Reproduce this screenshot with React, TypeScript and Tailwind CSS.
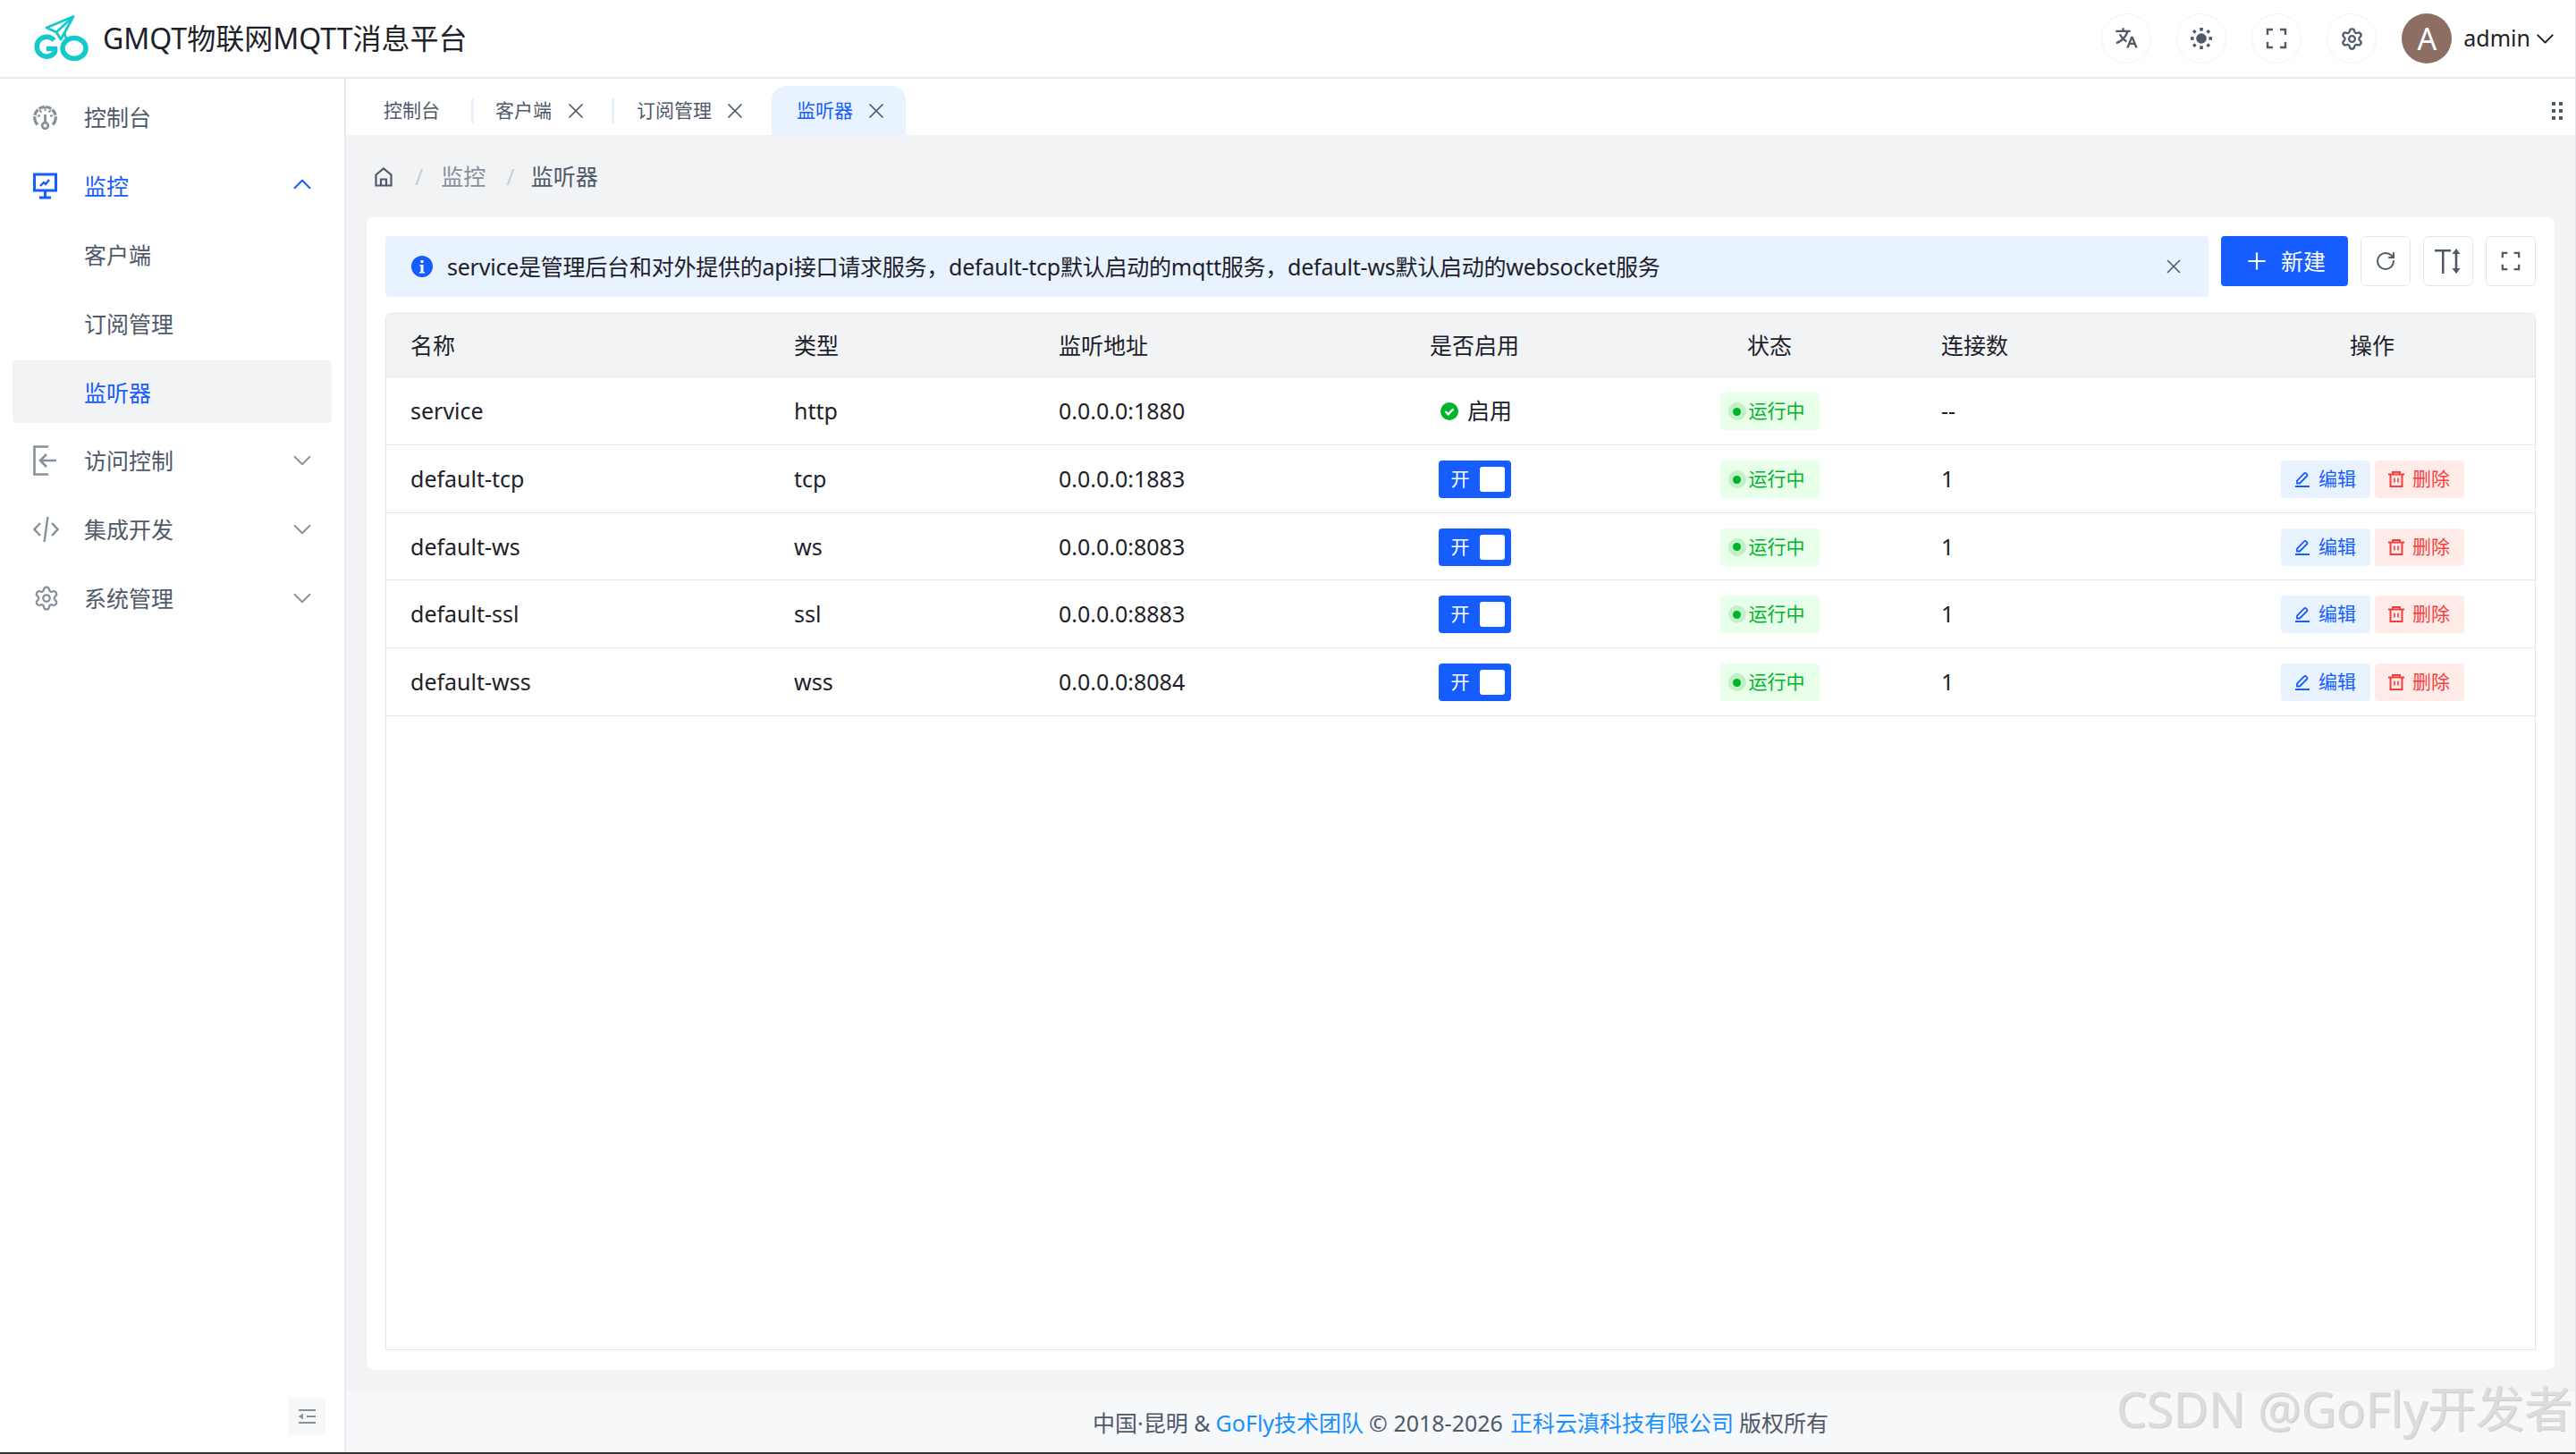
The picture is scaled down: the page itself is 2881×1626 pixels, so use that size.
import React from 'react'
import { ChevronDown, ChevronUp, Plus, RotateCw, Settings, X } from 'lucide-react'
import { RiTranslate2 } from 'react-icons/ri'

const Logo = () => (
  <svg width="64" height="52" viewBox="0 0 64 52" fill="none" className="shrink-0">
    <path d="M45 1.500 L15 14 L26 19 L31 27 L35 20 Z" stroke="#14c9c9" strokeWidth="2.800" strokeLinejoin="round" />
    <path d="M45 1.500 L26 19 M35 20 L37 26" stroke="#14c9c9" strokeWidth="2.600" />
    <path d="M23.500 28 A11 11 0 1 0 24.500 41 L24.500 37.500 L15 37.500" stroke="#14c9c9" strokeWidth="5.500" />
    <ellipse cx="46" cy="37" rx="13" ry="11.500" stroke="#14c9c9" strokeWidth="5.500" />
  </svg>
)

const FullIcon = ({ size = 24 }: { size?: number }) => (
  <svg width={size} height={size} viewBox="0 0 24 24" fill="none" stroke="#4e5969" strokeWidth="2.4">
    <path d="M2 8V2h6M16 2h6v6M22 16v6h-6M8 22H2v-6" />
  </svg>
)

const SunIcon = () => (
  <svg width="24" height="24" viewBox="0 0 24 24" fill="#4e5969">
    <circle cx="12" cy="12" r="5.8" />
    <rect x="10.2" y="0" width="3.6" height="3.6" />
    <rect x="10.2" y="20.4" width="3.6" height="3.6" />
    <rect x="0" y="10.2" width="3.6" height="3.6" />
    <rect x="20.4" y="10.2" width="3.6" height="3.6" />
    <rect x="2.6" y="2.6" width="3.4" height="3.4" transform="rotate(45 4.3 4.3)" />
    <rect x="18" y="2.6" width="3.4" height="3.4" transform="rotate(45 19.7 4.3)" />
    <rect x="2.6" y="18" width="3.4" height="3.4" transform="rotate(45 4.3 19.7)" />
    <rect x="18" y="18" width="3.4" height="3.4" transform="rotate(45 19.7 19.7)" />
  </svg>
)

const HeaderBtn = ({ children }: { children: React.ReactNode }) => (
  <div className="flex h-[56px] w-[56px] items-center justify-center rounded-full border border-[#f2f3f5] bg-white">{children}</div>
)

const DashboardIcon = () => (
  <svg width="27" height="30" viewBox="0 0 27 30" fill="none" stroke="#86909c" strokeWidth="3.200">
    <path d="M5 23.500 A11.800 11.800 0 1 1 22 23.500" />
    <path d="M13.500 12v9" strokeWidth="2.800" />
    <circle cx="13.500" cy="24.500" r="3.400" strokeWidth="2.600" />
    <path d="M13.500 0v3.500M4.500 4.500l2.500 2.500M22.500 4.500L20 7M0 13.500h3.500M27 13.500h-3.500" stroke="#fff" strokeWidth="1.400" />
    <path d="M13.500 5v3M7.500 7.500l2 2M19.500 7.500l-2 2M5 13.500h3M22 13.500h-3" strokeWidth="1.800" />
  </svg>
)

const MonitorIcon = () => (
  <svg width="27" height="30" viewBox="0 0 27 30" fill="none" stroke="#165dff" strokeWidth="3">
    <path d="M1.500 2h24v18h-24z" />
    <path d="M13.500 20v7M7 28h13" />
    <path d="M8 15l4-4 2 2 4-5" strokeWidth="2.400" />
  </svg>
)

const AccessIcon = () => (
  <svg width="27" height="34" viewBox="0 0 27 34" fill="none" stroke="#86909c" strokeWidth="2.6">
    <path d="M17 1.500H1.500v31H17" />
    <path d="M26 17H8M15 10l-7 7 7 7" />
  </svg>
)

const CodeIcon = () => (
  <svg width="29" height="30" viewBox="0 0 29 30" fill="none" stroke="#86909c" strokeWidth="2.4">
    <path d="M8 8l-6.500 7L8 22M21 8l6.500 7L21 22M16.500 1l-4 28" />
  </svg>
)

const EditIcon = () => (
  <svg width="18" height="18" viewBox="0 0 18 18" fill="none" stroke="#165dff" strokeWidth="1.800" className="mr-[9px]">
    <path d="M1 17h16" strokeWidth="2" />
    <path d="M3 13.500V10.500L11 2.500a1.500 1.500 0 0 1 2.200 0l.8.8a1.500 1.500 0 0 1 0 2.200L6 13.500z" />
  </svg>
)

const TrashIcon = () => (
  <svg width="18" height="18" viewBox="0 0 18 18" fill="none" stroke="#f53f3f" strokeWidth="2" className="mr-[9px]">
    <path d="M0 3.500h18M5 3.500V1h8v2.500" />
    <path d="M2.500 3.500V17h13V3.500" />
    <path d="M7 7.500v5M11 7.500v5" strokeWidth="1.600" />
  </svg>
)

const menuTextCls = 'text-[25px] leading-none'

const MenuItem = ({
  icon,
  label,
  arrow,
  active,
}: {
  icon?: React.ReactNode
  label: string
  arrow?: 'up' | 'down'
  active?: boolean
}) => (
  <div className="flex h-[77px] items-center pr-[30px] pl-[37px]">
    <div className="flex w-[57px] justify-start">{icon}</div>
    <span className={`${menuTextCls} mt-[2px] ${active ? 'text-[#165dff]' : 'text-[#4e5969]'}`}>{label}</span>
    {arrow === 'up' && <ChevronUp size={34} strokeWidth={1.4} color="#165dff" className="ml-auto -mt-1" />}
    {arrow === 'down' && <ChevronDown size={34} strokeWidth={1.3} color="#86909c" className="ml-auto" />}
  </div>
)

const Sidebar = () => (
  <div className="flex w-[387px] shrink-0 flex-col border-r-[2px] border-[#e9eaee] bg-white pt-[4px]">
    <MenuItem icon={<DashboardIcon />} label="控制台" />
    <MenuItem icon={<MonitorIcon />} label="监控" arrow="up" active />
    <MenuItem label="客户端" />
    <MenuItem label="订阅管理" />
    <div className="mx-[14px] my-[3px] flex h-[70px] items-center rounded-[5px] bg-[#f2f3f5] pl-[80px]">
      <span className={`${menuTextCls} mt-[2px] text-[#165dff]`}>监听器</span>
    </div>
    <MenuItem icon={<AccessIcon />} label="访问控制" arrow="down" />
    <MenuItem icon={<CodeIcon />} label="集成开发" arrow="down" />
    <MenuItem icon={<Settings size={30} strokeWidth={1.8} color="#86909c" />} label="系统管理" arrow="down" />
    <div className="mt-auto mr-[21px] mb-[19px] flex h-[42px] w-[42px] items-center justify-center self-end rounded-[4px] bg-[#f7f8fa]">
      <svg width="19" height="16" viewBox="0 0 19 16" fill="#86909c">
        <rect x="0" y="0" width="19" height="2" />
        <rect x="9" y="7" width="10" height="2" />
        <rect x="0" y="14" width="19" height="2" />
        <path d="M0 8l5-3.500v7z" />
      </svg>
    </div>
  </div>
)

const TabClose = () => <X size={28} strokeWidth={1.5} color="#4e5969" />

const Sep = () => <div className="h-[28px] w-[3px] bg-[#e8f3ff]" />

const Tabs = () => (
  <div className="flex h-[63px] shrink-0 items-center bg-white pt-[8px] pr-[16px] pl-[42px] text-[21px] text-[#4e5969]">
    <span>控制台</span>
    <div className="ml-[35px] mr-[24px]"><Sep /></div>
    <span>客户端</span>
    <div className="ml-[13px]"><TabClose /></div>
    <div className="ml-[26px] mr-[25px]"><Sep /></div>
    <span>订阅管理</span>
    <div className="ml-[12px]"><TabClose /></div>
    <div className="ml-[27px] flex h-[55px] w-[150px] items-center rounded-t-[16px] bg-[#e8f3ff] pl-[28px]">
      <span className="text-[#165dff]">监听器</span>
      <div className="ml-[12px]"><TabClose /></div>
    </div>
    <div className="ml-auto mr-[-2px] grid grid-cols-2 gap-x-[4px] gap-y-[4px]">
      {[0, 1, 2, 3, 4, 5].map(i => (
        <div key={i} className="h-[4px] w-[4px] bg-[#4e5969]" />
      ))}
    </div>
  </div>
)

const Breadcrumb = () => (
  <div className="flex h-[92px] shrink-0 items-center pt-[2px] pl-[32px] text-[25px]">
    <svg width="20" height="22" viewBox="0 0 20 22" fill="none" stroke="#4e5969" strokeWidth="2.2">
      <path d="M1.500 20.500V8.500L10 1.500l8.500 7v12zM7 20.500v-7h6v7" />
    </svg>
    <span className="ml-[25px] mr-[20px] text-[#c9cdd4]">/</span>
    <span className="text-[#86909c]">监控</span>
    <span className="ml-[23px] mr-[18px] text-[#c9cdd4]">/</span>
    <span className="text-[#4e5969]">监听器</span>
  </div>
)

const ToolBtn = ({ children }: { children: React.ReactNode }) => (
  <div className="flex h-[56px] w-[56px] items-center justify-center rounded-[6px] border border-[#e5e6eb] bg-white">{children}</div>
)

const Toolbar = () => (
  <div className="flex h-[86px] shrink-0 items-start">
    <div className="flex h-[68px] w-[2039px] items-center rounded-[4px] bg-[#e8f3ff] pl-[29px] text-[25px] text-[#1d2129]">
      <svg width="24" height="24" viewBox="0 0 24 24" className="mr-[16px] shrink-0">
        <circle cx="12" cy="12" r="12" fill="#165dff" />
        <rect x="10.500" y="5" width="3" height="3" fill="#fff" />
        <path d="M9.500 10h4v8h1.500v1.500H9V18h1.500v-6.500h-1z" fill="#fff" />
      </svg>
      <span className="mt-[2px] tracking-[-0.23px] whitespace-nowrap">service是管理后台和对外提供的api接口请求服务，default-tcp默认启动的mqtt服务，default-ws默认启动的websocket服务</span>
      <X size={26} strokeWidth={1.5} color="#4e5969" className="ml-auto mr-[26px] shrink-0" />
    </div>
    <div className="ml-[14px] flex h-[56px] w-[142px] items-center justify-center rounded-[4px] bg-[#165dff] text-[25px] text-white">
      <Plus size={30} strokeWidth={1.7} className="mr-[12px]" />
      <span className="mt-[2px]">新建</span>
    </div>
    <div className="ml-[14px]">
      <ToolBtn><RotateCw size={24} strokeWidth={2} color="#4e5969" /></ToolBtn>
    </div>
    <div className="ml-[14px]">
      <ToolBtn>
        <svg width="30" height="28" viewBox="0 0 30 28" fill="#4e5969">
          <path d="M0 1h18v2.500h-7.500V28H8V3.500H0z" />
          <path d="M24 0l4.500 6h-3.200v16h3.200L24 28l-4.500-6h3.200V6h-3.200z" />
        </svg>
      </ToolBtn>
    </div>
    <div className="ml-[14px]">
      <ToolBtn><FullIcon size={22} /></ToolBtn>
    </div>
  </div>
)

const Running = () => (
  <div className="mx-auto flex h-[42px] w-[111px] items-center rounded-[4px] bg-[#e8ffea] pl-[9px] text-[21px] text-[#00b42a]">
    <div className="mr-[3px] flex h-[20px] w-[20px] items-center justify-center rounded-full bg-[#c2f0c9]">
      <div className="h-[9px] w-[9px] rounded-full bg-[#00b42a]" />
    </div>
    运行中
  </div>
)

const OnSwitch = () => (
  <div className="mx-auto flex h-[42px] w-[81px] items-center rounded-[4px] bg-[#165dff] pr-[7px] pl-[14px] text-[21px] text-white">
    开
    <div className="ml-auto h-[28px] w-[28px] rounded-[3px] bg-white" />
  </div>
)

const Actions = () => (
  <div className="flex items-center justify-center gap-[5px] text-[21px]">
    <div className="flex h-[42px] w-[100px] items-center justify-center rounded-[4px] bg-[#e8f3ff] text-[#165dff]">
      <EditIcon />
      编辑
    </div>
    <div className="flex h-[42px] w-[100px] items-center justify-center rounded-[4px] bg-[#ffece8] text-[#f53f3f]">
      <TrashIcon />
      删除
    </div>
  </div>
)

const rows = [
  { name: 'service', type: 'http', addr: '0.0.0.0:1880', conn: '--' },
  { name: 'default-tcp', type: 'tcp', addr: '0.0.0.0:1883', conn: '1' },
  { name: 'default-ws', type: 'ws', addr: '0.0.0.0:8083', conn: '1' },
  { name: 'default-ssl', type: 'ssl', addr: '0.0.0.0:8883', conn: '1' },
  { name: 'default-wss', type: 'wss', addr: '0.0.0.0:8084', conn: '1' },
]

const ListenerTable = () => (
  <div className="min-h-0 flex-1 rounded-t-[6px] border border-[#e5e6eb]">
    <table className="w-full table-fixed border-collapse text-[25px] text-[#1d2129]">
      <colgroup>
        <col className="w-[428px]" />
        <col className="w-[296px]" />
        <col className="w-[327px]" />
        <col className="w-[332px]" />
        <col className="w-[328px]" />
        <col className="w-[328px]" />
        <col />
      </colgroup>
      <thead>
        <tr className="h-[70px] border-b border-[#e5e6eb] bg-[#f2f3f5] text-left [&>th]:pt-[2px]">
          <th className="pl-[27px] font-normal">名称</th>
          <th className="pl-[28px] font-normal">类型</th>
          <th className="pl-[28px] font-normal">监听地址</th>
          <th className="text-center font-normal">是否启用</th>
          <th className="text-center font-normal">状态</th>
          <th className="pl-[28px] font-normal">连接数</th>
          <th className="text-center font-normal">操作</th>
        </tr>
      </thead>
      <tbody>
        {rows.map((row, index) => (
          <tr key={row.name} className={`border-b border-[#e5e6eb] [&>td]:pt-[2px] ${index === 2 ? 'h-[75px]' : 'h-[76px]'}`}>
            <td className="pl-[27px]">{row.name}</td>
            <td className="pl-[28px]">{row.type}</td>
            <td className="pl-[28px]">{row.addr}</td>
            <td>
              {index === 0 ? (
                <div className="flex items-center pl-[128px]">
                  <svg width="20" height="20" viewBox="0 0 20 20" className="mr-[10px]">
                    <circle cx="10" cy="10" r="10" fill="#00b42a" />
                    <path d="M5.500 10l3.200 3.200 5.800-5.800" fill="none" stroke="#fff" strokeWidth="2.400" />
                  </svg>
                  启用
                </div>
              ) : (
                <OnSwitch />
              )}
            </td>
            <td><Running /></td>
            <td className="pl-[28px]">{row.conn}</td>
            <td>{index > 0 && <Actions />}</td>
          </tr>
        ))}
      </tbody>
    </table>
  </div>
)

export default function App() {
  return (
    <div className="relative flex h-screen flex-col overflow-hidden border-r border-[#e5e6eb] bg-white font-['Noto_Sans','Noto_Sans_CJK_SC',sans-serif]">
      <div className="flex h-[88px] shrink-0 items-center border-b-[2px] border-[#e9eaee] bg-white pr-[25px] pl-[37px]">
        <Logo />
        <span className="ml-[14px] text-[32px] text-[#1d2129]">GMQT物联网MQTT消息平台</span>
        <div className="ml-auto flex items-center gap-[28px]">
          <HeaderBtn><RiTranslate2 size={28} color="#4e5969" /></HeaderBtn>
          <HeaderBtn><SunIcon /></HeaderBtn>
          <HeaderBtn><FullIcon /></HeaderBtn>
          <HeaderBtn><Settings size={27} strokeWidth={2} color="#4e5969" /></HeaderBtn>
        </div>
        <div className="flex items-center">
          <div className="ml-[28px] flex h-[56px] w-[56px] items-center justify-center rounded-full bg-[#8d6e63] text-[34px] text-white">A</div>
          <span className="ml-[13px] text-[25px] text-[#1d2129]">admin</span>
          <ChevronDown size={33} strokeWidth={1.5} color="#1d2129" className="mr-[-8px]" />
        </div>
      </div>
      <div className="flex min-h-0 flex-1">
        <Sidebar />
        <div className="flex min-w-0 flex-1 flex-col bg-[#f2f3f5]">
          <Tabs />
          <Breadcrumb />
          <div className="mr-[23px] ml-[23px] flex min-h-0 flex-1 flex-col rounded-[8px] bg-white px-[21px] pt-[21px] pb-[22px]">
            <Toolbar />
            <ListenerTable />
          </div>
          <div className="mt-[24px] flex h-[68px] shrink-0 items-center justify-center bg-[#f7f8fa] pt-[4px] text-[25px] text-[#4e5969]">
            <span>中国·昆明 &amp; </span>
            <span className="ml-[6px] text-[#1890ff]">GoFly技术团队</span>
            <span className="ml-[6px]">© 2018-2026 </span>
            <span className="ml-[8px] text-[#1890ff]">正科云滇科技有限公司</span>
            <span className="ml-[6px]">版权所有</span>
          </div>
        </div>
      </div>
      <div className="h-[2px] shrink-0 bg-[#333]" />
      <div className="absolute right-[3px] bottom-[24px] text-[54px] leading-none whitespace-nowrap text-[#dcdcdc] [text-shadow:1px_1px_1px_#c8c8c8]">
        CSDN @GoFly开发者
      </div>
    </div>
  )
}
